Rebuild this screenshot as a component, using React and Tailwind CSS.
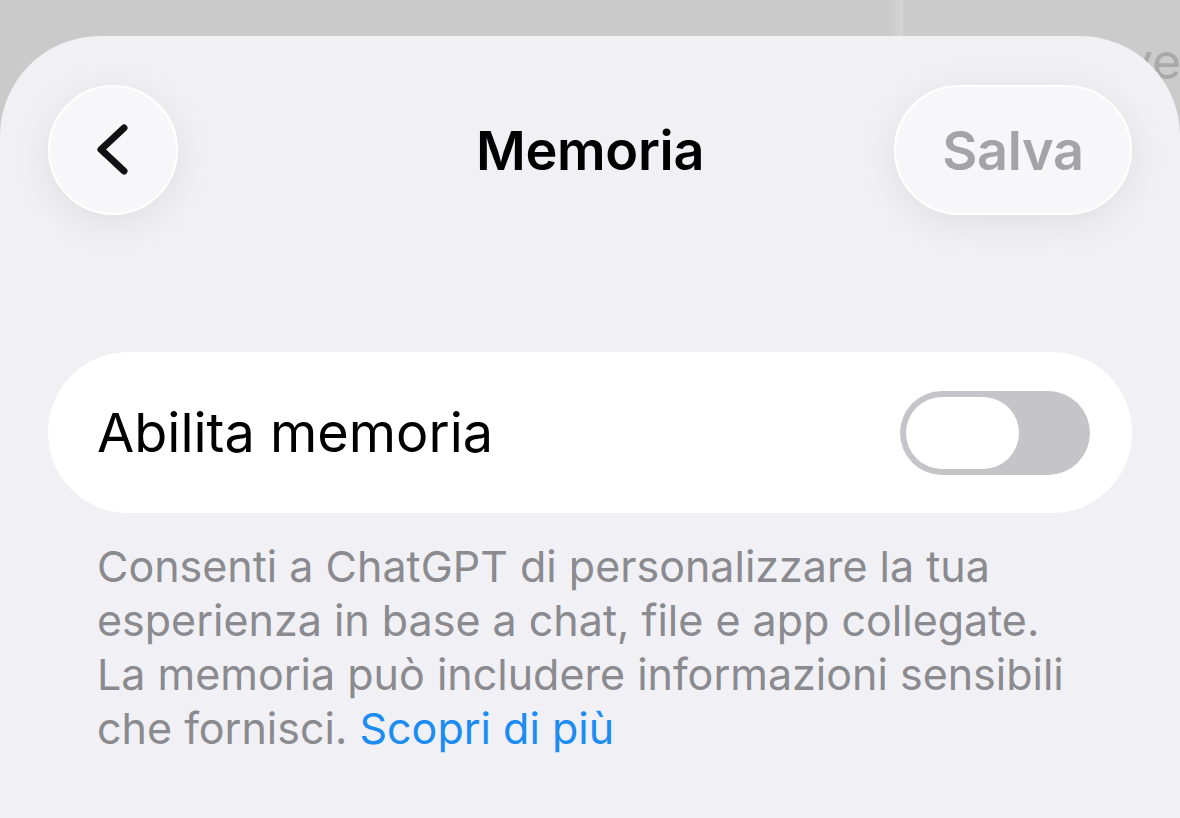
import React from "react";

function BackButton() {
  return (
    <button
      className="flex h-[130px] w-[130px] items-center justify-center rounded-full border-2 border-white bg-[#f7f7f9] shadow-[0_8px_40px_rgba(0,0,0,0.08)]"
      aria-label="Indietro"
    >
      <svg width="40" height="60" viewBox="0 0 40 60" fill="none">
        <path
          d="M31 8 L8 29.5 L31 51"
          stroke="#111"
          strokeWidth="7"
          strokeLinecap="round"
          strokeLinejoin="round"
        />
      </svg>
    </button>
  );
}

function Toggle() {
  // iOS switch, off state
  return (
    <div className="flex h-[84px] w-[190px] items-center rounded-full bg-[#c5c5c9] p-[6px]">
      <div className="h-[72px] w-[113px] rounded-full bg-white" />
    </div>
  );
}

export default function App() {
  return (
    <div
      className="relative h-[818px] w-[1180px] overflow-hidden bg-[#cacaca]"
      style={{ fontFamily: "Inter, 'Noto Sans', sans-serif" }}
    >
      {/* sheet behind, peeking at top right */}
      <div className="absolute right-[-40px] top-[-60px] h-[200px] w-[317px] rounded-[40px] bg-[#cbcbcb] shadow-[-6px_0_12px_rgba(255,255,255,0.25)]">
        <span className="absolute left-[222px] top-[84px] text-[50px] text-[#a9a9a9]">ve</span>
      </div>

      <div className="relative mt-[36px] h-[782px] rounded-t-[100px] bg-[#f0f0f5] px-[48px]">
        {/* header */}
        <div className="grid grid-cols-[1fr_auto_1fr] items-center pt-[49px]">
          <BackButton />
          <h1 className="text-[54px] font-semibold tracking-[-0.3px] text-black">Memoria</h1>
          <button className="flex h-[130px] w-[238px] items-center justify-center justify-self-end rounded-full border-2 border-white bg-[#f7f7f9] text-[54px] font-semibold tracking-[-0.3px] text-[#a4a4a8] shadow-[0_8px_40px_rgba(0,0,0,0.08)]">
            Salva
          </button>
        </div>

        {/* setting row */}
        <div className="mt-[137px] flex h-[161px] items-center justify-between rounded-[80px] bg-white pl-[49px] pr-[42px]">
          <span className="text-[54px] text-black">Abilita memoria</span>
          <Toggle />
        </div>

        {/* footer description */}
        <p className="mt-[26px] pl-[49px] text-[43px] leading-[54px] text-[#8a8a8f]">
          Consenti a ChatGPT di personalizzare la tua
          <br />
          esperienza in base a chat, file e app collegate.
          <br />
          La memoria può includere informazioni sensibili
          <br />
          che fornisci. <span className="text-[#1b8cf2]">Scopri di più</span>
        </p>
      </div>
    </div>
  );
}
